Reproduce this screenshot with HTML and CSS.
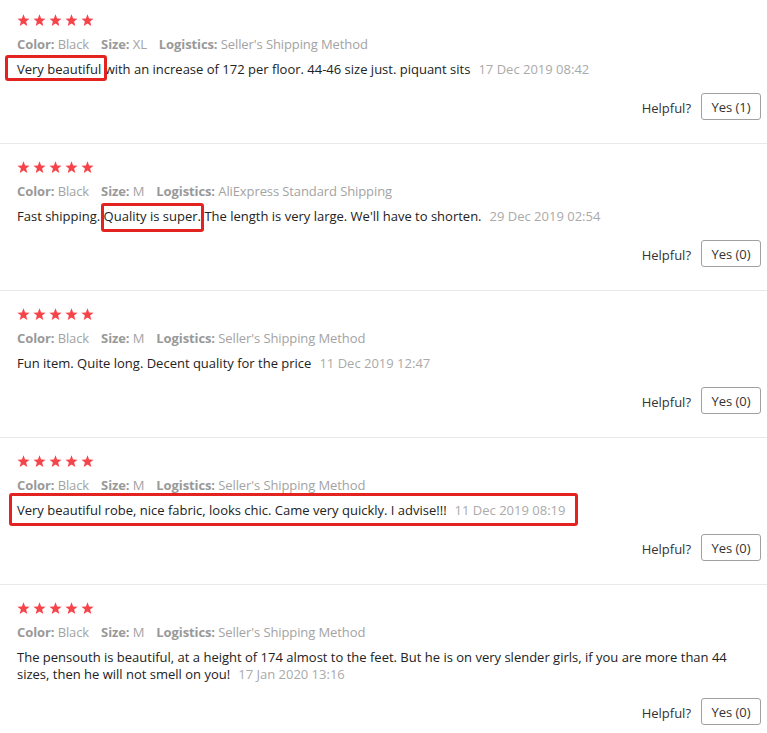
FILE: index.html
```html
<!DOCTYPE html>
<html>
<head>
<meta charset="utf-8">
<link rel="stylesheet" href="styles.css">
</head>
<body>
<div class="reviews">
  <div class="review first">
    <div class="stars">
      <svg viewBox="0 0 12 12"><polygon points="6,0.3 7.5,4.1 11.6,4.3 8.4,6.9 9.5,11 6,8.7 2.5,11 3.6,6.9 0.4,4.3 4.5,4.1"/></svg>
      <svg viewBox="0 0 12 12"><polygon points="6,0.3 7.5,4.1 11.6,4.3 8.4,6.9 9.5,11 6,8.7 2.5,11 3.6,6.9 0.4,4.3 4.5,4.1"/></svg>
      <svg viewBox="0 0 12 12"><polygon points="6,0.3 7.5,4.1 11.6,4.3 8.4,6.9 9.5,11 6,8.7 2.5,11 3.6,6.9 0.4,4.3 4.5,4.1"/></svg>
      <svg viewBox="0 0 12 12"><polygon points="6,0.3 7.5,4.1 11.6,4.3 8.4,6.9 9.5,11 6,8.7 2.5,11 3.6,6.9 0.4,4.3 4.5,4.1"/></svg>
      <svg viewBox="0 0 12 12"><polygon points="6,0.3 7.5,4.1 11.6,4.3 8.4,6.9 9.5,11 6,8.7 2.5,11 3.6,6.9 0.4,4.3 4.5,4.1"/></svg>
    </div>
    <div class="meta"><span class="item"><b>Color:</b> Black</span><span class="item"><b>Size:</b> XL</span><span class="item"><b>Logistics:</b> Seller's Shipping Method</span></div>
    <p class="body"><span class="mark mark-a">Very beautiful</span> with an increase of 172 per floor. 44-46 size just. piquant sits<span class="date">17 Dec 2019 08:42</span></p>
    <div class="helpful"><span class="label">Helpful?</span><button class="yes">Yes (1)</button></div>
  </div>

  <div class="review">
    <div class="stars">
      <svg viewBox="0 0 12 12"><polygon points="6,0.3 7.5,4.1 11.6,4.3 8.4,6.9 9.5,11 6,8.7 2.5,11 3.6,6.9 0.4,4.3 4.5,4.1"/></svg>
      <svg viewBox="0 0 12 12"><polygon points="6,0.3 7.5,4.1 11.6,4.3 8.4,6.9 9.5,11 6,8.7 2.5,11 3.6,6.9 0.4,4.3 4.5,4.1"/></svg>
      <svg viewBox="0 0 12 12"><polygon points="6,0.3 7.5,4.1 11.6,4.3 8.4,6.9 9.5,11 6,8.7 2.5,11 3.6,6.9 0.4,4.3 4.5,4.1"/></svg>
      <svg viewBox="0 0 12 12"><polygon points="6,0.3 7.5,4.1 11.6,4.3 8.4,6.9 9.5,11 6,8.7 2.5,11 3.6,6.9 0.4,4.3 4.5,4.1"/></svg>
      <svg viewBox="0 0 12 12"><polygon points="6,0.3 7.5,4.1 11.6,4.3 8.4,6.9 9.5,11 6,8.7 2.5,11 3.6,6.9 0.4,4.3 4.5,4.1"/></svg>
    </div>
    <div class="meta"><span class="item"><b>Color:</b> Black</span><span class="item"><b>Size:</b> M</span><span class="item"><b>Logistics:</b> AliExpress Standard Shipping</span></div>
    <p class="body">Fast shipping. <span class="mark mark-b">Quality is super.</span> The length is very large. We'll have to shorten.<span class="date">29 Dec 2019 02:54</span></p>
    <div class="helpful"><span class="label">Helpful?</span><button class="yes">Yes (0)</button></div>
  </div>

  <div class="review">
    <div class="stars">
      <svg viewBox="0 0 12 12"><polygon points="6,0.3 7.5,4.1 11.6,4.3 8.4,6.9 9.5,11 6,8.7 2.5,11 3.6,6.9 0.4,4.3 4.5,4.1"/></svg>
      <svg viewBox="0 0 12 12"><polygon points="6,0.3 7.5,4.1 11.6,4.3 8.4,6.9 9.5,11 6,8.7 2.5,11 3.6,6.9 0.4,4.3 4.5,4.1"/></svg>
      <svg viewBox="0 0 12 12"><polygon points="6,0.3 7.5,4.1 11.6,4.3 8.4,6.9 9.5,11 6,8.7 2.5,11 3.6,6.9 0.4,4.3 4.5,4.1"/></svg>
      <svg viewBox="0 0 12 12"><polygon points="6,0.3 7.5,4.1 11.6,4.3 8.4,6.9 9.5,11 6,8.7 2.5,11 3.6,6.9 0.4,4.3 4.5,4.1"/></svg>
      <svg viewBox="0 0 12 12"><polygon points="6,0.3 7.5,4.1 11.6,4.3 8.4,6.9 9.5,11 6,8.7 2.5,11 3.6,6.9 0.4,4.3 4.5,4.1"/></svg>
    </div>
    <div class="meta"><span class="item"><b>Color:</b> Black</span><span class="item"><b>Size:</b> M</span><span class="item"><b>Logistics:</b> Seller's Shipping Method</span></div>
    <p class="body">Fun item. Quite long. Decent quality for the price<span class="date">11 Dec 2019 12:47</span></p>
    <div class="helpful"><span class="label">Helpful?</span><button class="yes">Yes (0)</button></div>
  </div>

  <div class="review">
    <div class="stars">
      <svg viewBox="0 0 12 12"><polygon points="6,0.3 7.5,4.1 11.6,4.3 8.4,6.9 9.5,11 6,8.7 2.5,11 3.6,6.9 0.4,4.3 4.5,4.1"/></svg>
      <svg viewBox="0 0 12 12"><polygon points="6,0.3 7.5,4.1 11.6,4.3 8.4,6.9 9.5,11 6,8.7 2.5,11 3.6,6.9 0.4,4.3 4.5,4.1"/></svg>
      <svg viewBox="0 0 12 12"><polygon points="6,0.3 7.5,4.1 11.6,4.3 8.4,6.9 9.5,11 6,8.7 2.5,11 3.6,6.9 0.4,4.3 4.5,4.1"/></svg>
      <svg viewBox="0 0 12 12"><polygon points="6,0.3 7.5,4.1 11.6,4.3 8.4,6.9 9.5,11 6,8.7 2.5,11 3.6,6.9 0.4,4.3 4.5,4.1"/></svg>
      <svg viewBox="0 0 12 12"><polygon points="6,0.3 7.5,4.1 11.6,4.3 8.4,6.9 9.5,11 6,8.7 2.5,11 3.6,6.9 0.4,4.3 4.5,4.1"/></svg>
    </div>
    <div class="meta"><span class="item"><b>Color:</b> Black</span><span class="item"><b>Size:</b> M</span><span class="item"><b>Logistics:</b> Seller's Shipping Method</span></div>
    <p class="body"><span class="mark mark-c">Very beautiful robe, nice fabric, looks chic. Came very quickly. I advise!!!<span class="date">11 Dec 2019 08:19</span></span></p>
    <div class="helpful"><span class="label">Helpful?</span><button class="yes">Yes (0)</button></div>
  </div>

  <div class="review">
    <div class="stars">
      <svg viewBox="0 0 12 12"><polygon points="6,0.3 7.5,4.1 11.6,4.3 8.4,6.9 9.5,11 6,8.7 2.5,11 3.6,6.9 0.4,4.3 4.5,4.1"/></svg>
      <svg viewBox="0 0 12 12"><polygon points="6,0.3 7.5,4.1 11.6,4.3 8.4,6.9 9.5,11 6,8.7 2.5,11 3.6,6.9 0.4,4.3 4.5,4.1"/></svg>
      <svg viewBox="0 0 12 12"><polygon points="6,0.3 7.5,4.1 11.6,4.3 8.4,6.9 9.5,11 6,8.7 2.5,11 3.6,6.9 0.4,4.3 4.5,4.1"/></svg>
      <svg viewBox="0 0 12 12"><polygon points="6,0.3 7.5,4.1 11.6,4.3 8.4,6.9 9.5,11 6,8.7 2.5,11 3.6,6.9 0.4,4.3 4.5,4.1"/></svg>
      <svg viewBox="0 0 12 12"><polygon points="6,0.3 7.5,4.1 11.6,4.3 8.4,6.9 9.5,11 6,8.7 2.5,11 3.6,6.9 0.4,4.3 4.5,4.1"/></svg>
    </div>
    <div class="meta"><span class="item"><b>Color:</b> Black</span><span class="item"><b>Size:</b> M</span><span class="item"><b>Logistics:</b> Seller's Shipping Method</span></div>
    <p class="body">The pensouth is beautiful, at a height of 174 almost to the feet. But he is on very slender girls, if you are more than 44 sizes, then he will not smell on you!<span class="date">17 Jan 2020 13:16</span></p>
    <div class="helpful"><span class="label">Helpful?</span><button class="yes">Yes (0)</button></div>
  </div>
</div>
</body>
</html>
```

FILE: styles.css
```css
html, body {
  margin: 0;
  padding: 0;
  background: #fff;
}

body {
  font-family: "Open Sans", "Liberation Sans", sans-serif;
  font-size: 13px;
  color: #333;
  overflow: hidden;
}

.reviews {
  display: flex;
  flex-direction: column;
}

.review {
  padding: 17px 6px 23px 17px;
  border-bottom: 1px solid #e8e8e8;
}

.review.first {
  padding-top: 14px;
}

.stars {
  display: flex;
  gap: 3px;
  height: 13px;
  margin-bottom: 8px;
}

.stars svg {
  width: 13px;
  height: 13px;
  fill: #f5454b;
}

.meta {
  display: flex;
  gap: 12px;
  line-height: 18px;
  color: #a3a3a3;
  margin-bottom: 8px;
  letter-spacing: -0.1px;
}

.meta b {
  font-weight: 700;
  color: #999;
}

.body {
  margin: 0;
  line-height: 17px;
  color: #222;
}

.date {
  color: #aaa;
  margin-left: 8px;
}

.mark {
  position: relative;
}

.mark::after {
  content: "";
  position: absolute;
  border: 3px solid #e3231f;
  border-radius: 3px;
  pointer-events: none;
}

.mark-a::after {
  left: -12px;
  right: -6px;
  top: -5px;
  bottom: -3px;
}

.mark-b::after {
  left: -3px;
  right: -3px;
  top: -4px;
  bottom: -7px;
}

.mark-c::after {
  left: -8px;
  right: -13px;
  top: -8px;
  bottom: -7px;
}

.helpful {
  display: flex;
  justify-content: flex-end;
  align-items: center;
  gap: 10px;
  margin-top: 15px;
}

.label {
  color: #333;
  padding-top: 3px;
}

.yes {
  font-family: "Open Sans", "Liberation Sans", sans-serif;
  font-size: 13px;
  color: #333;
  background: #fff;
  border: 1px solid #a0a0a0;
  border-radius: 3px;
  width: 60px;
  height: 27px;
  padding: 0;
  line-height: 18px;
}
```
